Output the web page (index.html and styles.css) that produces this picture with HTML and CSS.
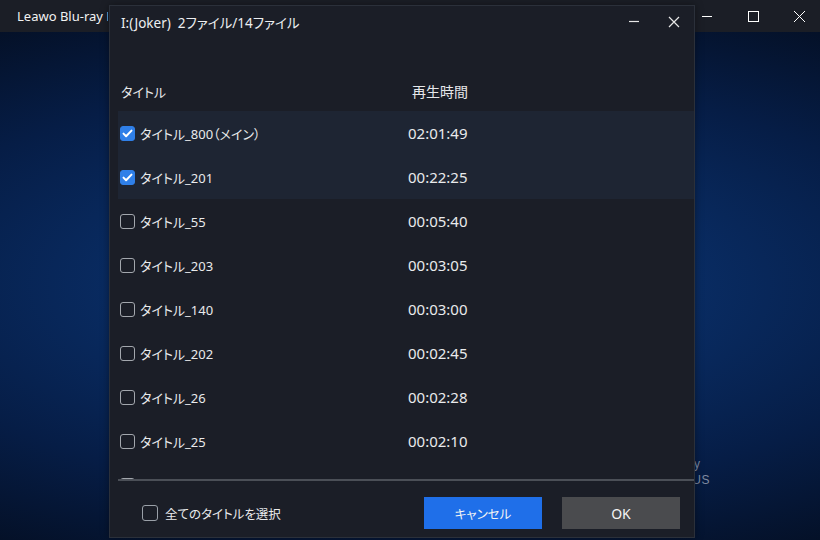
FILE: index.html
```html
<!DOCTYPE html>
<html lang="ja">
<head>
<meta charset="utf-8">
<title>Leawo Blu-ray Player</title>
<link rel="stylesheet" href="styles.css">
</head>
<body>
<div class="app">
  <header class="appbar">
    <span class="app-title">Leawo Blu-ray Player</span>
    <div class="win-ctrls">
      <svg class="wc" width="46" height="32" viewBox="0 0 46 32"><path d="M18 16.5h10" stroke="#fff" stroke-width="1"/></svg>
      <svg class="wc" width="46" height="32" viewBox="0 0 46 32"><rect x="18.5" y="11.5" width="10" height="10" fill="none" stroke="#fff" stroke-width="1"/></svg>
      <svg class="wc" width="46" height="32" viewBox="0 0 46 32"><path d="M18 11l11 11M29 11L18 22" stroke="#fff" stroke-width="1"/></svg>
    </div>
  </header>
  <main class="stage">
    <div class="logo"><span class="logo-l1">Blu-ray</span><span class="logo-l2">PLUS</span></div>
  </main>

  <section class="dialog">
    <div class="dlg-title">
      <span class="dlg-name">I:(Joker)&nbsp;&nbsp;2ファイル/14ファイル</span>
      <div class="dlg-ctrls">
        <svg width="40" height="32" viewBox="0 0 40 32"><path d="M15 15.5h10" stroke="#e8e8e8" stroke-width="1.2"/></svg>
        <svg width="40" height="32" viewBox="0 0 40 32"><path d="M15 11l10 10M25 11l-10 10" stroke="#e8e8e8" stroke-width="1.2"/></svg>
      </div>
    </div>
    <div class="col-head">
      <span class="ch-title">タイトル</span>
      <span class="ch-time">再生時間</span>
    </div>
    <div class="list">
      <div class="row sel"><span class="cb on"></span><span class="name">タイトル_800（メイン）</span><span class="time">02:01:49</span></div>
      <div class="row sel"><span class="cb on"></span><span class="name">タイトル_201</span><span class="time">00:22:25</span></div>
      <div class="row"><span class="cb"></span><span class="name">タイトル_55</span><span class="time">00:05:40</span></div>
      <div class="row"><span class="cb"></span><span class="name">タイトル_203</span><span class="time">00:03:05</span></div>
      <div class="row"><span class="cb"></span><span class="name">タイトル_140</span><span class="time">00:03:00</span></div>
      <div class="row"><span class="cb"></span><span class="name">タイトル_202</span><span class="time">00:02:45</span></div>
      <div class="row"><span class="cb"></span><span class="name">タイトル_26</span><span class="time">00:02:28</span></div>
      <div class="row"><span class="cb"></span><span class="name">タイトル_25</span><span class="time">00:02:10</span></div>
      <div class="row"><span class="cb"></span><span class="name"></span><span class="time"></span></div>
    </div>
    <div class="sep"></div>
    <div class="dlg-foot">
      <label class="select-all"><span class="cb big"></span><span>全てのタイトルを選択</span></label>
      <div class="btns">
        <button class="btn primary">キャンセル</button>
        <button class="btn secondary">OK</button>
      </div>
    </div>
  </section>
</div>
</body>
</html>
```

FILE: styles.css
```css
* { box-sizing: border-box; }
html, body { margin: 0; padding: 0; }
body {
  width: 820px;
  height: 540px;
  overflow: hidden;
  font-family: "Noto Sans", "Noto Sans CJK JP", sans-serif;
  color: #e9eaec;
  background: #06101f;
}
.app {
  position: relative;
  width: 820px;
  height: 540px;
  display: flex;
  flex-direction: column;
}
.appbar {
  height: 32px;
  background: #1b1e26;
  display: flex;
  align-items: center;
  justify-content: space-between;
  padding-left: 17px;
}
.app-title {
  font-size: 13px;
  color: #f2f2f2;
  width: 91px;
  overflow: hidden;
  white-space: nowrap;
}
.win-ctrls { display: flex; margin-right: -2px; }
.wc { display: block; }
.stage {
  flex: 1;
  position: relative;
  background:
    radial-gradient(ellipse 95% 62% at 50% 50%, #0b3270 0%, #092c63 35%, #061d46 68%, #040f24 100%);
}
.logo {
  position: absolute;
  right: 110px;
  top: 424px;
  display: flex;
  flex-direction: column;
  align-items: flex-end;
  color: #7f8aa0;
  font-family: "Liberation Sans", sans-serif;
  line-height: 16px;
}
.logo-l1 { font-size: 12px; margin-right: 10px; }
.logo-l2 { font-size: 12px; letter-spacing: 0.5px; }

.dialog {
  position: absolute;
  left: 109px;
  top: 5px;
  width: 586px;
  height: 533px;
  background: #1b1e27;
  border: 1px solid #2b303a;
  display: flex;
  flex-direction: column;
  box-shadow: 0 0 8px rgba(0,0,0,0.4);
}
.dlg-title {
  height: 32px;
  display: flex;
  align-items: center;
  justify-content: space-between;
  padding-left: 11px;
}
.dlg-name {
  font-size: 13.5px;
  color: #eceef0;
  font-feature-settings: "palt";
}
.dlg-ctrls { display: flex; margin-right: 0; }
.dlg-ctrls svg { display: block; }

.col-head {
  height: 73px;
  display: grid;
  grid-template-columns: 291px auto;
  align-items: end;
  padding-left: 11px;
  padding-bottom: 10px;
  color: #e6e7ea;
  font-feature-settings: "palt";
}
.ch-title { font-size: 13px; }
.ch-time { font-size: 14px; }
.list {
  height: 368px;
  margin-left: 8px;
  overflow: hidden;
}
.row {
  height: 44px;
  display: grid;
  grid-template-columns: 15px 263px auto;
  column-gap: 5px;
  align-items: center;
  padding-left: 2px;
  color: #e9eaec;
}
.row.sel { background: #1e2533; }
.name {
  font-size: 13px;
  font-feature-settings: "palt";
}
.time { font-size: 15px; }
.cb {
  width: 15px;
  height: 15px;
  border: 1.5px solid #a3a7ad;
  border-radius: 3px;
  display: inline-block;
}
.cb.on {
  background: #2f7fe8 url("data:image/svg+xml,%3Csvg xmlns='http://www.w3.org/2000/svg' viewBox='0 0 15 15'%3E%3Cpath d='M3.5 7.6l2.6 2.6 5.4-5.6' fill='none' stroke='%23fff' stroke-width='2' stroke-linecap='round' stroke-linejoin='round'/%3E%3C/svg%3E") center/15px 15px no-repeat;
  border-color: #2f7fe8;
}
.sep {
  height: 2px;
  margin-left: 8px;
  background: #4b4f57;
}
.dlg-foot {
  flex: 1;
  display: flex;
  align-items: flex-start;
  justify-content: space-between;
  padding: 16px 14px 0 32px;
}
.select-all {
  display: flex;
  align-items: center;
  gap: 7px;
  height: 32px;
  font-size: 12.5px;
  color: #e9eaec;
  font-feature-settings: "palt";
}
.cb.big {
  width: 16px;
  height: 16px;
  border-color: #9aa0a8;
}
.btns { display: flex; gap: 20px; }
.btn {
  width: 118px;
  height: 32px;
  border: none;
  font-family: "Noto Sans", "Noto Sans CJK JP", sans-serif;
  color: #f4f4f4;
  padding: 0;
  font-feature-settings: "palt";
}
.btn.primary { background: #1f6fe9; font-size: 12.5px; }
.btn.secondary { background: #4a4b4e; font-size: 14px; }
```
